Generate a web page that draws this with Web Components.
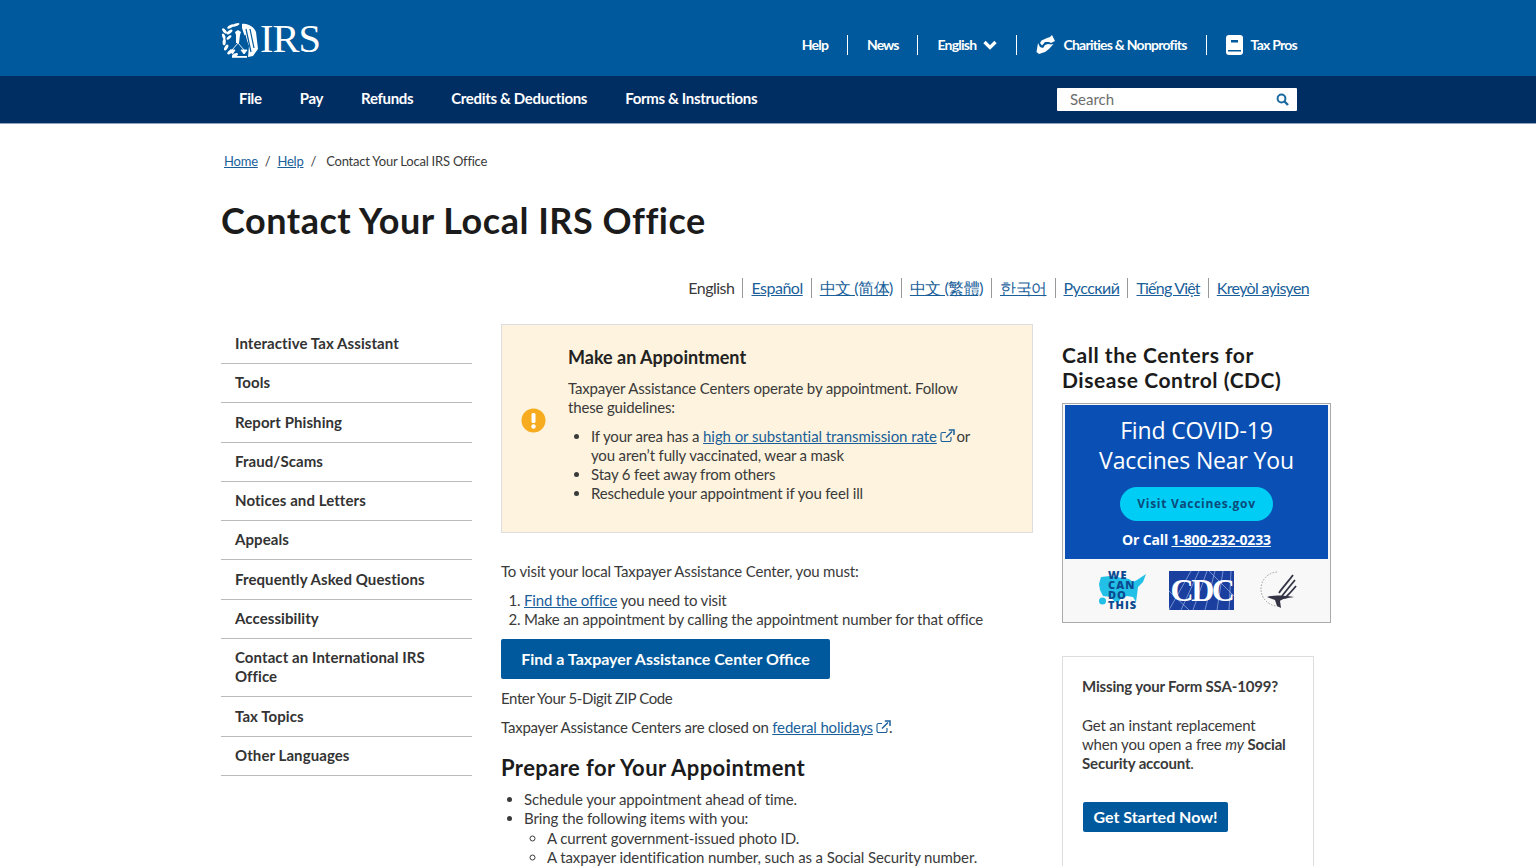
<!DOCTYPE html>
<html lang="en"><head><meta charset="utf-8"><title>Contact Your Local IRS Office</title>
<style>
html,body{margin:0;height:866px;overflow:hidden;background:#fff}
body{font-family:"Lato","Liberation Sans",sans-serif;color:#3a3a3a}
</style></head><body>
<irs-header></irs-header>
<irs-nav></irs-nav>
<irs-page></irs-page>
<template id="t-header"><style>
:host{display:block;background:#00599c;height:76px;color:#fff;font:700 14px/17px Lato,sans-serif;letter-spacing:-.75px}
.wrap{width:1076px;margin-left:221px;height:76px;display:flex;justify-content:space-between}
.logo{display:flex;align-items:center;height:79px}
.logo span{font:400 40.500px/1 "Liberation Serif",serif;letter-spacing:-1px;margin-left:1px}
.links{display:flex;align-items:center;height:89px}
.l{display:flex;align-items:center;gap:7px;padding:0 19px;height:20px;border-right:1px solid #fff}
.l.i{gap:8px}
.l.c{padding-left:18px}
.l:last-child{border:0;padding-right:0}
svg{display:block}
</style><div class="wrap"><div class="logo">
<svg width="38" height="36" viewBox="0 0 38 36" fill="#fff">
<g><ellipse cx="3.500" cy="9" rx="3.200" ry="1.500" transform="rotate(50 3.500 9)"/><ellipse cx="2.800" cy="14.500" rx="3.200" ry="1.500" transform="rotate(70 2.800 14.500)"/><ellipse cx="3.200" cy="20" rx="3.300" ry="1.600" transform="rotate(95 3.200 20)"/><ellipse cx="5.200" cy="25.500" rx="3.300" ry="1.600" transform="rotate(120 5.200 25.500)"/><ellipse cx="9" cy="30" rx="3.300" ry="1.600" transform="rotate(140 9 30)"/><ellipse cx="14" cy="33" rx="3.200" ry="1.500" transform="rotate(160 14 33)"/><ellipse cx="9.500" cy="4.500" rx="3.600" ry="1.500" transform="rotate(-30 9.500 4.500)"/><ellipse cx="8.500" cy="10" rx="3.400" ry="1.500" transform="rotate(-35 8.500 10)"/><ellipse cx="8" cy="15.500" rx="3" ry="1.400" transform="rotate(-40 8 15.500)"/><ellipse cx="15" cy="2.800" rx="3.600" ry="1.400" transform="rotate(-20 15 2.800)"/></g>
<path d="M21 2c6-1 12 3 14 8l2 17-5 7-5 1 1-11-5-12-2-6z"/>
<path d="M25 7l5 23M29 7l4 19M24 13l3 12" stroke="#00599c" stroke-width="1.200" fill="none"/>
<path d="M14 10l3-2 3 2-1 3-1 8h-3l0-8z"/>
<path d="M17 21l-6 7M17 21l6 7M9 28h5l-2.500 4zM20 28h6l-3 4z" fill="#fff" stroke="#fff" stroke-width=".9"/>
<path d="M11 34h15v1.800H11z"/></svg>
<span>IRS</span></div>
<div class="links"><div class="l">Help</div><div class="l" style="letter-spacing:-1px">News</div>
<div class="l">English <svg width="14" height="10" viewBox="0 0 14 10"><path d="M1.500 2L7 7.500 12.500 2" fill="none" stroke="#fff" stroke-width="3.200"/></svg></div>
<div class="l i c"><svg width="20" height="19" viewBox="0 0 20 19" fill="#fff"><path d="M6.500 5.500L12 3l3-1 2-2 3 6-4 2-2-1h-4L7 10.500 5 8z"/><path d="M3 8L1.500 17 4 19l6-2 4-3 4.500-5-2.500.6-3-.6-3 1-2 3-3-1z"/></svg>Charities &amp; Nonprofits</div>
<div class="l i"><svg width="17" height="20" viewBox="0 0 17 20"><path d="M3 0h11a3 3 0 0 1 3 3v14a3 3 0 0 1-3 3H3a3 3 0 0 1-3-3V3a3 3 0 0 1 3-3z" fill="#fff"/><path d="M5 5h7v2.500H5zM2 15h13v1.500H2z" fill="#00599c"/></svg>Tax Pros</div></div></div>
</template>
<template id="t-nav"><style>
:host{display:block;background:#002d62;height:47px;border-bottom:1px solid #8fa3bd;color:#fff;font:700 15px/45px Lato,sans-serif;letter-spacing:-.33px}
.wrap{width:1076px;margin-left:221px;display:flex;justify-content:space-between;align-items:center;height:47px}
nav{display:flex;gap:38px;padding:0 0 2px 18px}
.s{width:240px;height:23px;background:#fff;border-radius:1px;display:flex;align-items:center;justify-content:space-between;box-sizing:border-box;padding:0 8px 0 13px;font:400 15px/23px Lato,sans-serif;color:#6d6d6d;letter-spacing:0}
</style><div class="wrap"><nav><span>File</span><span>Pay</span><span>Refunds</span><span>Credits &amp; Deductions</span><span>Forms &amp; Instructions</span></nav>
<div class="s">Search<svg width="13" height="13" viewBox="0 0 13 13"><circle cx="5.500" cy="5.500" r="3.900" fill="none" stroke="#1b6aa0" stroke-width="2"/><path d="M8.500 8.500l3.500 3.500" stroke="#1b6aa0" stroke-width="2.400"/></svg></div></div>
</template>
<template id="t-page"><style>
:host{display:block;width:1110px;margin-left:221px;font:400 15px/19px Lato,sans-serif;color:#3a3a3a;letter-spacing:-.16px}
a{color:#1a5f9a;text-decoration:underline}
.crumb{font-size:13px;line-height:16px;padding:29px 0 0 3px;display:flex;gap:7px;letter-spacing:-.22px}
h1{font:700 36px/44px Lato,sans-serif;color:#1b1b1b;margin:29px 0 0;letter-spacing:.52px}
.langs{display:flex;justify-content:flex-end;margin:36px 22px 0 0;height:20px;font-size:16px;line-height:20px;letter-spacing:-.5px}
.langs>*{padding:0 8px;border-left:1px solid #999}
.langs>:first-child{border:0}.langs>:last-child{padding-right:0}
.cols{display:flex;margin-top:26px}
.center{width:532px;margin-left:29px;flex:none}
.right{width:269px;margin-left:29px;flex:none}
p{margin:0}
ul,ol{margin:0;padding:0 0 0 23px}
ul ul{list-style:circle;margin-top:1px}
.tight{letter-spacing:-.12px}
h2{font:700 22px/28px Lato,sans-serif;color:#1b1b1b;margin:17px 0 8px;letter-spacing:.4px}
h3{font:700 21px/25px Lato,sans-serif;color:#1b1b1b;margin:18px 0 11px;letter-spacing:.55px}
</style>
<div class="crumb"><a>Home</a><span>/</span><a>Help</a><span>/</span><span style="margin-left:3px">Contact Your Local IRS Office</span></div>
<h1>Contact Your Local IRS Office</h1>
<div class="langs"><span>English</span><a>Español</a><a>中文 (简体)</a><a>中文 (繁體)</a><a>한국어</a><a>Русский</a><a style="letter-spacing:-.8px">Tiếng Việt</a><a style="letter-spacing:-.65px">Kreyòl ayisyen</a></div>
<div class="cols"><side-menu></side-menu>
<div class="center"><alert-box></alert-box>
<p style="margin-top:29px">To visit your local Taxpayer Assistance Center, you must:</p>
<ol style="margin-top:10px"><li><a>Find the office</a> you need to visit</li><li>Make an appointment by calling the appointment number for that office</li></ol>
<blue-btn style="margin-top:10px" w="329" h="40" size="16">Find a Taxpayer Assistance Center Office</blue-btn>
<p style="margin-top:10px;letter-spacing:-.4px">Enter Your 5-Digit ZIP Code</p>
<p style="margin-top:10px"><span style="letter-spacing:-.23px">Taxpayer Assistance Centers are closed on </span><a>federal holidays</a><ext-ico></ext-ico>.</p>
<h2>Prepare for Your Appointment</h2>
<ul class="tight"><li>Schedule your appointment ahead of time.</li><li>Bring the following items with you:<ul><li>A current government-issued photo ID.</li><li>A taxpayer identification number, such as a Social Security number.</li></ul></li></ul>
</div>
<div class="right"><h3>Call the Centers for<br>Disease Control (CDC)</h3><cdc-ad></cdc-ad><ssa-card></ssa-card></div>
</div>
</template>
<template id="t-menu"><style>
:host{display:block;width:251px;flex:none;margin-top:1px;font:700 15px/19px Lato,sans-serif;color:#333;letter-spacing:.08px}
div{padding:9px 30px 10px 14px;border-bottom:1px solid #bbb;margin-bottom:.3px}
</style><div>Interactive Tax Assistant</div><div>Tools</div><div>Report Phishing</div><div>Fraud/Scams</div><div>Notices and Letters</div><div>Appeals</div><div>Frequently Asked Questions</div><div>Accessibility</div><div>Contact an International IRS Office</div><div>Tax Topics</div><div>Other Languages</div>
</template>
<template id="t-alert"><style>
:host{display:flex;box-sizing:border-box;height:209px;background:#fdf3de;border:1px solid #ddd;align-items:center;font:400 15px/19px Lato,sans-serif;color:#3a3a3a;letter-spacing:-.16px}
svg{flex:none;margin:0 22px 16px 19px;display:block}
.b{width:410px;margin-top:-8px}
h4{font:700 18px/22px Lato,sans-serif;color:#222;margin:0 0 11px;letter-spacing:0}
p{margin:0 0 10px}
ul{margin:0;padding:0 0 0 23px}
a{color:#1a5f9a;text-decoration:underline;letter-spacing:-.07px}
</style><svg width="25" height="25" viewBox="0 0 25 25"><circle cx="12.500" cy="12.500" r="12" fill="#f6ac1e"/><rect x="10.500" y="5" width="4" height="10" rx="1.500" fill="#fff"/><circle cx="12.500" cy="18.500" r="2.200" fill="#fff"/></svg>
<div class="b"><h4>Make an Appointment</h4><p>Taxpayer Assistance Centers operate by appointment. Follow these guidelines:</p>
<ul><li>If your area has a <a>high or substantial transmission rate</a><ext-ico></ext-ico> or you aren’t fully vaccinated, wear a mask</li><li>Stay 6 feet away from others</li><li>Reschedule your appointment if you feel ill</li></ul></div>
</template>
<template id="t-ext"><style>:host{display:inline-block;vertical-align:-1px;margin:0 -2px 0 3px}svg{display:block}</style>
<svg width="15" height="14" viewBox="0 0 15 14"><path d="M11 8v3a1.500 1.500 0 0 1-1.500 1.500h-7A1.500 1.500 0 0 1 1 11V5a1.500 1.500 0 0 1 1.500-1.500H6" fill="none" stroke="#1a5f9a" stroke-width="1.100"/><path d="M6 8.500L12 2.500M8.800 1H14v5" fill="none" stroke="#1a5f9a" stroke-width="1.500"/></svg></template>
<template id="t-btn"><style>:host{display:flex;align-items:center;justify-content:center;box-sizing:border-box;background:#00599c;color:#fff;border-radius:2px;padding-bottom:2px;font-family:Lato,sans-serif;font-weight:700;letter-spacing:0}</style><slot></slot></template>
<template id="t-cdc"><style>
:host{display:block;box-sizing:border-box;width:269px;height:220px;border:1px solid #aaa;padding:1px;background:#f8f8f9}
.top{background:#0a50b4;height:154px;margin:0 1px;color:#fff;text-align:center;font-family:"Open Sans",sans-serif;display:flex;flex-direction:column;align-items:center}
.t{font-size:23px;line-height:30px;margin-top:10px}
.pill{width:153px;height:34px;flex:none;border-radius:17px;background:#00cdf6;color:#0b4a7a;font:700 12px/34px "Open Sans",sans-serif;letter-spacing:.7px;margin-top:12px}
.c{font:700 14px/18px "Open Sans",sans-serif;margin-top:10px}
.logos{display:flex;align-items:center;height:62px;padding-left:35px}
.wc{position:relative;width:48px;height:40px;margin-right:22px;font:800 11px/10px "Open Sans",sans-serif;color:#0b4a90;letter-spacing:1px}
.wc svg{position:absolute;left:0;top:0}
.wc div{position:relative;padding:0 0 0 9px}
.cdc{width:65px;height:39px;background:#1b3f9f;color:#fff;font:700 32px/39px "Liberation Serif",serif;text-align:center;letter-spacing:-2.500px;margin-right:21px;position:relative;overflow:hidden}
.cdc svg{position:absolute;left:0;top:0}
.cdc span{position:relative}
</style><div class="top"><div class="t">Find COVID-19<br>Vaccines Near You</div><div class="pill">Visit Vaccines.gov</div><div class="c">Or Call <u>1-800-232-0233</u></div></div>
<div class="logos"><div class="wc"><svg width="48" height="40" viewBox="0 0 48 40"><path d="M2 7l9-1 19 3 4 3 4-2 9-6-3 8-5 5-1 8-1 7-3-5-6-1-6 2-3 5-4-2-3-4-8-1-3-6-1-6z" fill="#22bfe6"/><circle cx="3.500" cy="31" r="3.500" fill="#22bfe6"/></svg><div>WE<br>CAN<br>DO<br>THIS</div></div>
<div class="cdc"><svg width="65" height="39" viewBox="0 0 65 39" stroke="#9db4e6" stroke-width=".7"><path d="M0 39L22 0M12 39L30 0M24 39L38 0M36 39L46 0M48 39L54 0M60 39L62 0M0 20L20 39M40 0L65 25"/></svg><span>CDC</span></div>
<svg width="46" height="42" viewBox="0 0 46 42"><path d="M22 3A17 17 0 1 0 24 37" fill="none" stroke="#999" stroke-width="1" stroke-dasharray="1.500 1.500"/><path d="M38 6C33 13 28 18 24 24M40 11C35 17 31 22 27 27M41 17C37 22 34 25 30 29" fill="none" stroke="#334" stroke-width="1.800"/><path d="M12 28c6-2 14-2 27 0-7 1-12 2-14 4l1 7-4-2-2-6z" fill="#334"/></svg></div>
</template>
<template id="t-ssa"><style>
:host{display:block;box-sizing:border-box;width:252px;height:260px;margin-top:33px;border:1px solid #ddd;padding:20px 10px 20px 19px;font:400 15px/19px Lato,sans-serif;color:#3a3a3a}
p{margin:0}
b{font-weight:700}
</style><p><b>Missing your Form SSA-1099?</b></p><p style="margin-top:20px">Get an instant replacement<br>when you open a free <i>my</i> <b>Social<br>Security account</b>.</p>
<blue-btn w="145" h="30" size="16" style="margin-top:29px;margin-left:1px">Get Started Now!</blue-btn>
</template>
<script>
function def(name,tid,extra){customElements.define(name,class extends HTMLElement{
constructor(){super();this.attachShadow({mode:"open"}).appendChild(document.getElementById(tid).content.cloneNode(true))}
connectedCallback(){if(extra)extra(this)}})}
def("irs-header","t-header");def("irs-nav","t-nav");def("irs-page","t-page");def("side-menu","t-menu");def("alert-box","t-alert");def("ext-ico","t-ext");def("cdc-ad","t-cdc");def("ssa-card","t-ssa");
def("blue-btn","t-btn",e=>{e.style.width=e.getAttribute("w")+"px";e.style.height=e.getAttribute("h")+"px";e.style.fontSize=e.getAttribute("size")+"px"});
</script>
</body></html>
